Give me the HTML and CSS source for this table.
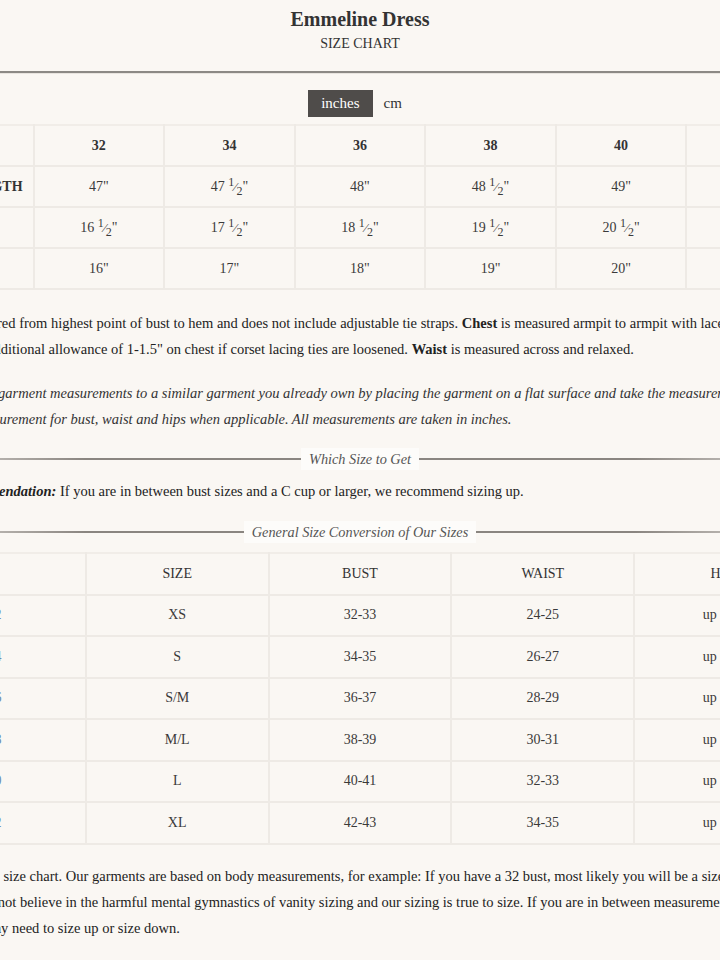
FILE: index.html
```html
<!DOCTYPE html>
<html lang="en">
<head>
<meta charset="utf-8">
<title>Emmeline Dress – Size Chart</title>
<link rel="stylesheet" href="styles.css">
</head>
<body>
<div class="stage">
  <div class="page">
    <header class="head">
      <h1 class="title">Emmeline Dress</h1>
      <div class="subtitle">SIZE CHART</div>
    </header>
    <hr class="rule">

    <div class="units">
      <span class="unit active">inches</span>
      <span class="unit">cm</span>
    </div>

    <table class="chart measure">
      <tr>
        <th></th><th>32</th><th>34</th><th>36</th><th>38</th><th>40</th><th>42</th>
      </tr>
      <tr>
        <th class="label">DRESS LENGTH</th>
        <td>47"</td>
        <td>47 <span class="frac"><sup>1</sup>&frasl;<sub>2</sub></span>"</td>
        <td>48"</td>
        <td>48 <span class="frac"><sup>1</sup>&frasl;<sub>2</sub></span>"</td>
        <td>49"</td>
        <td>49 <span class="frac"><sup>1</sup>&frasl;<sub>2</sub></span>"</td>
      </tr>
      <tr>
        <th class="label">CHEST</th>
        <td>16 <span class="frac"><sup>1</sup>&frasl;<sub>2</sub></span>"</td>
        <td>17 <span class="frac"><sup>1</sup>&frasl;<sub>2</sub></span>"</td>
        <td>18 <span class="frac"><sup>1</sup>&frasl;<sub>2</sub></span>"</td>
        <td>19 <span class="frac"><sup>1</sup>&frasl;<sub>2</sub></span>"</td>
        <td>20 <span class="frac"><sup>1</sup>&frasl;<sub>2</sub></span>"</td>
        <td>21 <span class="frac"><sup>1</sup>&frasl;<sub>2</sub></span>"</td>
      </tr>
      <tr>
        <th class="label">WAIST</th>
        <td>16"</td><td>17"</td><td>18"</td><td>19"</td><td>20"</td><td>21"</td>
      </tr>
    </table>

    <p class="note">Length is measured from highest point of bust to hem and does not include adjustable tie straps. <b>Chest</b> is measured armpit to armpit with laced up corset closed.<br>There is some additional allowance of 1-1.5" on chest if corset lacing ties are loosened. <b>Waist</b> is measured across and relaxed.</p>

    <p class="note tip">Please compare garment measurements to a similar garment you already own by placing the garment on a flat surface and take the measurements across.<br>Double the measurement for bust, waist and hips when applicable. All measurements are taken in inches.</p>

    <div class="divider"><span>Which Size to Get</span></div>

    <p class="note rec"><b><i>Fitting Recommendation:</i></b> If you are in between bust sizes and a C cup or larger, we recommend sizing up.</p>

    <div class="divider"><span>General Size Conversion of Our Sizes</span></div>

    <table class="chart conversion">
      <tr><th></th><th>SIZE</th><th>BUST</th><th>WAIST</th><th>HIPS</th></tr>
      <tr><td class="us">02</td><td>XS</td><td>32-33</td><td>24-25</td><td>up to 36</td></tr>
      <tr><td class="us">04</td><td>S</td><td>34-35</td><td>26-27</td><td>up to 38</td></tr>
      <tr><td class="us">06</td><td>S/M</td><td>36-37</td><td>28-29</td><td>up to 40</td></tr>
      <tr><td class="us">08</td><td>M/L</td><td>38-39</td><td>30-31</td><td>up to 42</td></tr>
      <tr><td class="us">10</td><td>L</td><td>40-41</td><td>32-33</td><td>up to 44</td></tr>
      <tr><td class="us">12</td><td>XL</td><td>42-43</td><td>34-35</td><td>up to 46</td></tr>
    </table>

    <p class="note">Here is a general size chart. Our garments are based on body measurements, for example: If you have a 32 bust, most likely you will be a size XS.<br>Note that we do not believe in the harmful mental gymnastics of vanity sizing and our sizing is true to size. If you are in between measurements, depending on<br>the style, you may need to size up or size down.</p>
  </div>
</div>
</body>
</html>
```

FILE: styles.css
```css
html, body {
  margin: 0;
  padding: 0;
  background: #faf7f3;
}

body {
  overflow-x: hidden;
  font-family: "Liberation Serif", "Times New Roman", serif;
  color: #222;
}

.stage {
  display: flex;
  justify-content: center;
  width: 100%;
}

.page {
  flex: 0 0 916px;
  width: 916px;
}

.head {
  text-align: center;
  padding-top: 8px;
}

.title {
  margin: 0;
  font-size: 20px;
  line-height: 22px;
  font-weight: bold;
  color: #333;
}

.subtitle {
  margin-top: 4px;
  font-size: 14px;
  line-height: 20px;
  color: #333;
}

.rule {
  margin: 17px 0 0;
  height: 0;
  border: 0;
  border-top: 2px solid #8c8985;
  border-bottom: 1px solid #e8e4df;
}

.units {
  display: flex;
  justify-content: center;
  align-items: center;
  gap: 11px;
  margin-top: 16px;
  padding-right: 10px;
}

.unit {
  font-size: 15px;
  line-height: 27px;
  color: #333;
}

.unit.active {
  background: #4f4c4a;
  color: #fff;
  padding: 0 13px;
  height: 27px;
}

.chart {
  width: 916px;
  border-collapse: collapse;
  table-layout: fixed;
  color: #3a3a3a;
  font-size: 14px;
}

.chart th,
.chart td {
  border: 2px solid #eeeae5;
  text-align: center;
  padding: 0;
  height: 39px;
}

.measure {
  margin-top: 7px;
}

.measure th {
  font-weight: bold;
  color: #333;
}

.chart tr:first-child th {
  border-top-color: #f1ede8;
}

.frac {
  font-size: 13px;
  white-space: nowrap;
}

.frac sup,
.frac sub {
  font-size: 12px;
  line-height: 0;
}

.conversion {
  margin-top: 9px;
}

.conversion th {
  font-weight: normal;
  color: #333;
}

.conversion th,
.conversion td {
  height: 39.5px;
}

.conversion td.us {
  color: #6a8db0;
}

.note {
  margin: 0;
  font-size: 14.5px;
  line-height: 26px;
  color: #222;
  white-space: nowrap;
}

.measure + .note {
  margin-top: 20px;
}

.tip {
  margin-top: 18px;
  font-style: italic;
  color: #333;
}

.rec {
  margin-top: 8px;
}

.conversion + .note {
  margin-top: 18px;
}

.divider {
  display: flex;
  justify-content: center;
  align-items: center;
  height: 22px;
  margin-top: 16px;
  background: linear-gradient(to right, rgba(138,133,128,0.2), #8a8580 20%, #8a8580 80%, rgba(138,133,128,0.2)) center / 100% 2px no-repeat;
}

.divider span {
  background: #fdfcfa;
  padding: 0 8px;
  font-size: 14.3px;
  line-height: 22px;
  font-style: italic;
  color: #555;
}

.rec + .divider {
  margin-top: 17px;
}
```
